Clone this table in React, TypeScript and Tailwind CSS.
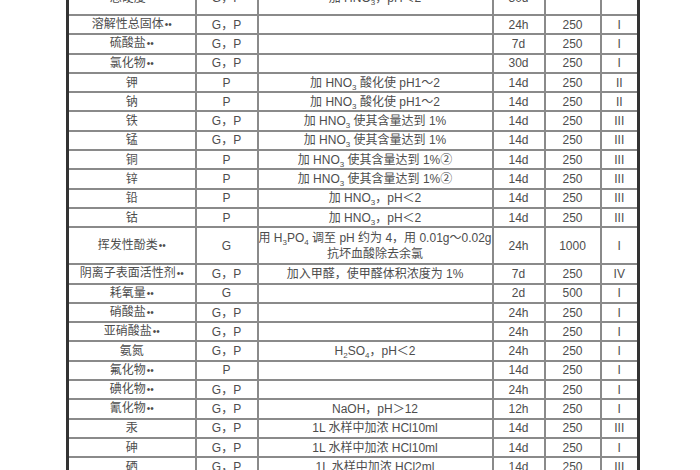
import React from "react";

type Row = {
  name: string;
  type: string;
  method: React.ReactNode;
  time: string;
  vol: string;
  cls: string;
  tall?: boolean;
};

const Sub = ({ children }: { children: React.ReactNode }) => (
  <sub className="text-[8px] leading-none align-[-1px]">{children}</sub>
);

const hno3 = (
  <>
    HNO<Sub>3</Sub>
  </>
);

const rows: Row[] = [
  { name: "溶解性总固体••", type: "G，P", method: "", time: "24h", vol: "250", cls: "I" },
  { name: "硫酸盐••", type: "G，P", method: "", time: "7d", vol: "250", cls: "I" },
  { name: "氯化物••", type: "G，P", method: "", time: "30d", vol: "250", cls: "I" },
  { name: "钾", type: "P", method: <>加 {hno3} 酸化使 pH1～2</>, time: "14d", vol: "250", cls: "II" },
  { name: "钠", type: "P", method: <>加 {hno3} 酸化使 pH1～2</>, time: "14d", vol: "250", cls: "II" },
  { name: "铁", type: "G，P", method: <>加 {hno3} 使其含量达到 1%</>, time: "14d", vol: "250", cls: "III" },
  { name: "锰", type: "G，P", method: <>加 {hno3} 使其含量达到 1%</>, time: "14d", vol: "250", cls: "III" },
  { name: "铜", type: "P", method: <>加 {hno3} 使其含量达到 1%②</>, time: "14d", vol: "250", cls: "III" },
  { name: "锌", type: "P", method: <>加 {hno3} 使其含量达到 1%②</>, time: "14d", vol: "250", cls: "III" },
  { name: "铅", type: "P", method: <>加 {hno3}，pH＜2</>, time: "14d", vol: "250", cls: "III" },
  { name: "钴", type: "P", method: <>加 {hno3}，pH＜2</>, time: "14d", vol: "250", cls: "III" },
  {
    name: "挥发性酚类••",
    type: "G",
    method: (
      <>
        用 H<Sub>3</Sub>PO<Sub>4</Sub> 调至 pH 约为 4，用 0.01g～0.02g
        <br />
        抗坏血酸除去余氯
      </>
    ),
    time: "24h",
    vol: "1000",
    cls: "I",
    tall: true,
  },
  { name: "阴离子表面活性剂••", type: "G，P", method: "加入甲醛，使甲醛体积浓度为 1%", time: "7d", vol: "250", cls: "IV" },
  { name: "耗氧量••", type: "G", method: "", time: "2d", vol: "500", cls: "I" },
  { name: "硝酸盐••", type: "G，P", method: "", time: "24h", vol: "250", cls: "I" },
  { name: "亚硝酸盐••", type: "G，P", method: "", time: "24h", vol: "250", cls: "I" },
  { name: "氨氮", type: "G，P", method: <>H<Sub>2</Sub>SO<Sub>4</Sub>，pH＜2</>, time: "24h", vol: "250", cls: "I" },
  { name: "氟化物••", type: "P", method: "", time: "14d", vol: "250", cls: "I" },
  { name: "碘化物••", type: "G，P", method: "", time: "24h", vol: "250", cls: "I" },
  { name: "氰化物••", type: "G，P", method: "NaOH，pH＞12", time: "12h", vol: "250", cls: "I" },
  { name: "汞", type: "G，P", method: "1L 水样中加浓 HCl10ml", time: "14d", vol: "250", cls: "III" },
  { name: "砷", type: "G，P", method: "1L 水样中加浓 HCl10ml", time: "14d", vol: "250", cls: "I" },
  { name: "硒", type: "G，P", method: "1L 水样中加浓 HCl2ml", time: "14d", vol: "250", cls: "III" },
];

const cell = "border-2 border-[#8a8a8a] text-center align-middle p-0 whitespace-nowrap";

const Name = ({ text }: { text: string }) => {
  const dots = text.endsWith("••");
  const base = dots ? text.slice(0, -2) : text;
  return (
    <>
      {base}
      {dots && <span className="text-[10px] tracking-normal ml-[1px]">••</span>}
    </>
  );
};

export default function App() {
  return (
    <div className="w-[700px] h-[470px] overflow-hidden bg-white">
      <table
        className="table-fixed border-collapse ml-[66px] -mt-[20px] text-[12px] leading-[16px] text-[#4d4d4d]"
        style={{ fontFamily: '"Liberation Sans", "Noto Sans CJK SC", sans-serif' }}
      >
        <colgroup>
          <col className="w-[128px]" />
          <col className="w-[62px]" />
          <col className="w-[231px]" />
          <col className="w-[52px]" />
          <col className="w-[56px]" />
          <col className="w-[38px]" />
        </colgroup>
        <tbody>
          <tr className="h-[34px]">
            <td className={`${cell} border-l-[3px] border-l-[#333]`}>
              <Name text="总硬度••" />
            </td>
            <td className={cell}>G，P</td>
            <td className={`${cell} align-bottom pb-[1px]`}>加 {hno3}，pH＜2</td>
            <td className={`${cell} align-bottom pb-[1px]`}>30d</td>
            <td className={cell}></td>
            <td className={`${cell} border-r-[3px] border-r-[#333]`}></td>
          </tr>
          {rows.map((r, i) => (
            <tr key={i} className={r.tall ? "h-[37px]" : "h-[19.3px]"}>
              <td className={`${cell} border-l-[3px] border-l-[#333]`}>
                <Name text={r.name} />
              </td>
              <td className={cell}>{r.type}</td>
              <td className={cell}>{r.method}</td>
              <td className={cell}>{r.time}</td>
              <td className={cell}>{r.vol}</td>
              <td className={`${cell} border-r-[3px] border-r-[#333]`}>{r.cls}</td>
            </tr>
          ))}
        </tbody>
      </table>
    </div>
  );
}
